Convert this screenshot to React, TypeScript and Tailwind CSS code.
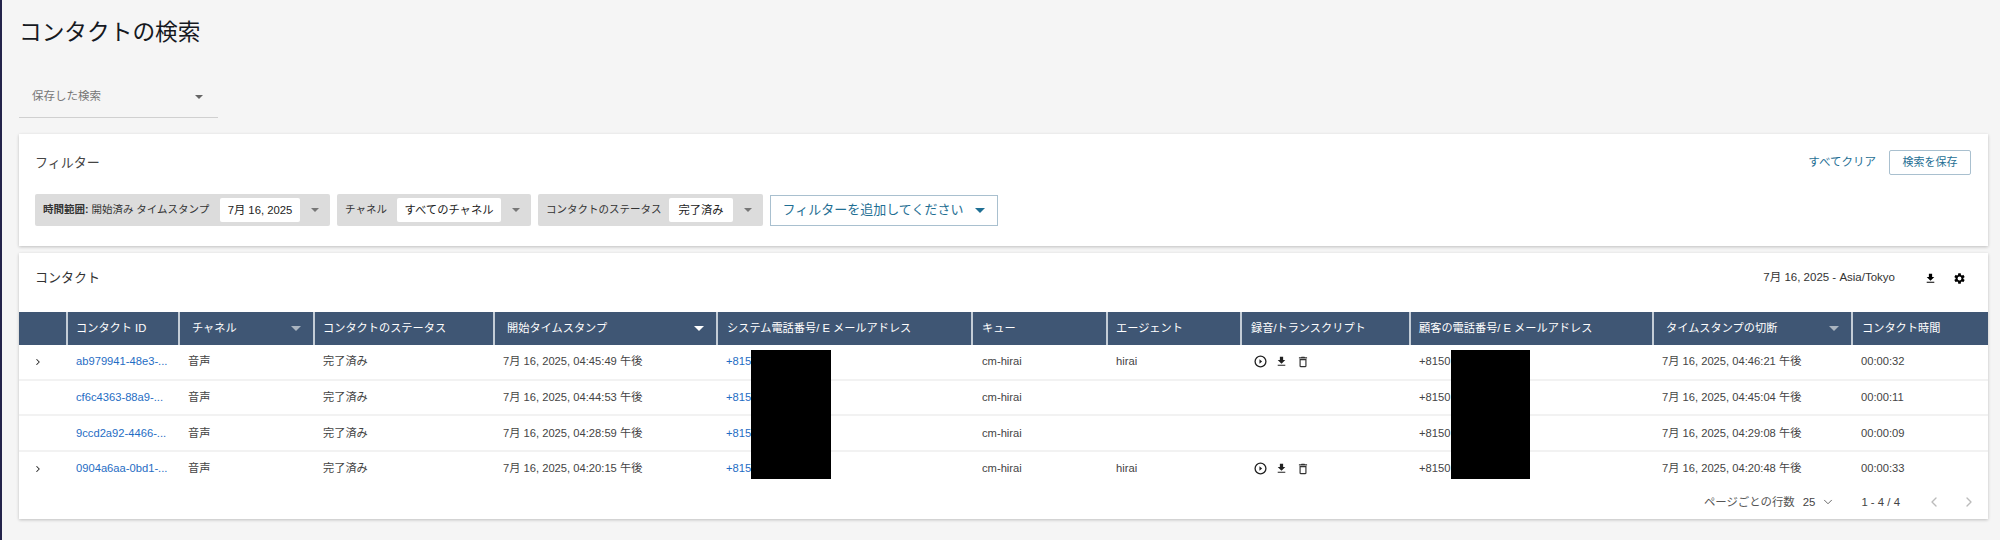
import { ChevronDown, ChevronLeft, ChevronRight } from 'lucide-react';

const gridCols = 'grid grid-cols-[48px_112px_135px_180px_223px_255px_135px_134px_169px_243px_199px_135px]';

const contacts = [
  { id: 'ab979941-48e3-...', start: '7月 16, 2025, 04:45:49 午後', agent: 'hirai', end: '7月 16, 2025, 04:46:21 午後', duration: '00:00:32', recorded: true },
  { id: 'cf6c4363-88a9-...', start: '7月 16, 2025, 04:44:53 午後', agent: '', end: '7月 16, 2025, 04:45:04 午後', duration: '00:00:11', recorded: false },
  { id: '9ccd2a92-4466-...', start: '7月 16, 2025, 04:28:59 午後', agent: '', end: '7月 16, 2025, 04:29:08 午後', duration: '00:00:09', recorded: false },
  { id: '0904a6aa-0bd1-...', start: '7月 16, 2025, 04:20:15 午後', agent: 'hirai', end: '7月 16, 2025, 04:20:48 午後', duration: '00:00:33', recorded: true },
];

function Caret({ className }: { className: string }) {
  return <span className={`w-0 h-0 border-x-[5px] border-x-transparent border-t-[5px] ${className}`} />;
}

function SmallCaret({ className }: { className: string }) {
  return <span className={`w-0 h-0 border-x-[4px] border-x-transparent border-t-[4px] ${className}`} />;
}

function DownloadIcon({ className }: { className: string }) {
  return (
    <svg viewBox="0 0 24 24" className={className} fill="currentColor">
      <path d="M5 20h14v-2H5v2zM19 9h-4V3H9v6H5l7 7 7-7z" />
    </svg>
  );
}

function PlayIcon() {
  return (
    <svg viewBox="0 0 24 24" className="w-[13px] h-[13px] text-[#222]" fill="none" stroke="currentColor" strokeWidth="2.4">
      <circle cx="12" cy="12" r="10" />
      <path d="M10 8l5 4-5 4z" fill="currentColor" stroke="none" />
    </svg>
  );
}

function TrashIcon() {
  return (
    <svg viewBox="0 0 24 24" className="w-[14px] h-[14px] text-[#333]" fill="currentColor">
      <path d="M6 19c0 1.1.9 2 2 2h8c1.1 0 2-.9 2-2V7H6v12zM8 9h8v10H8V9zm7.5-5l-1-1h-5l-1 1H5v2h14V4h-3.5z" />
    </svg>
  );
}

function GearIcon() {
  return (
    <svg viewBox="0 0 24 24" className="w-[13px] h-[13px] text-black" fill="currentColor">
      <path d="M19.14 12.94c.04-.3.06-.61.06-.94s-.02-.64-.07-.94l2.03-1.58a.49.49 0 0 0 .12-.61l-1.92-3.32a.49.49 0 0 0-.59-.22l-2.39.96a7.03 7.03 0 0 0-1.62-.94l-.36-2.54a.48.48 0 0 0-.48-.41h-3.84a.48.48 0 0 0-.47.41l-.36 2.54c-.59.24-1.13.57-1.62.94l-2.39-.96a.49.49 0 0 0-.59.22L2.74 8.87a.48.48 0 0 0 .12.61l2.03 1.58c-.05.3-.09.63-.09.94s.02.64.07.94l-2.03 1.58a.49.49 0 0 0-.12.61l1.92 3.32c.12.22.37.29.59.22l2.39-.96c.5.38 1.03.7 1.62.94l.36 2.54c.05.24.24.41.48.41h3.84c.24 0 .44-.17.47-.41l.36-2.54c.59-.24 1.13-.56 1.62-.94l2.39.96c.22.08.47 0 .59-.22l1.92-3.32a.48.48 0 0 0-.12-.61l-2.01-1.58zM12 15.6A3.6 3.6 0 1 1 12 8.4a3.6 3.6 0 0 1 0 7.2z" />
    </svg>
  );
}

function Chip({ children, value, valueWidth, width }: { children: React.ReactNode; value: string; valueWidth: string; width: string }) {
  return (
    <div className={`flex items-center h-8 pl-2 bg-[#dcdcdc] rounded-[2px] text-[10.5px] text-[#333] ${width}`}>
      <span className="flex-1 whitespace-nowrap">{children}</span>
      <span className={`flex items-center justify-center h-6 bg-white rounded-[2px] text-[11.3px] text-[#222] whitespace-nowrap ${valueWidth}`}>{value}</span>
      <span className="w-[30px] flex justify-center shrink-0">
        <SmallCaret className="border-t-[#777]" />
      </span>
    </div>
  );
}

function HeaderCell({ label, pad, caret }: { label: string; pad: string; caret?: 'dim' | 'bright' }) {
  return (
    <div className={`flex items-center justify-between border-l-2 border-[#c3ccd6] first:border-l-0 -ml-px first:ml-0 pr-[13px] whitespace-nowrap ${pad}`}>
      <span>{label}</span>
      {caret && <Caret className={caret === 'bright' ? 'border-t-white' : 'border-t-[#aab4c0]'} />}
    </div>
  );
}

export default function App() {
  return (
    <div className="min-h-[540px] bg-[#f5f5f5] border-l-2 border-[#23234a] pl-[17px] pr-3 font-['Liberation_Sans','Noto_Sans_CJK_JP',sans-serif]">
      <h1 className="h-16 flex items-center text-[22.7px] font-normal text-[#16191f]">コンタクトの検索</h1>

      <div className="w-[199px] h-[46px] mt-2 pt-[4px] flex items-center justify-between pl-[13px] pr-[15px] border-b border-[#d0d0d0] text-[11.5px] text-[#777]">
        <span>保存した検索</span>
        <SmallCaret className="border-t-[#666]" />
      </div>

      <section className="mt-4 h-28 bg-white shadow-[0_1px_3px_rgba(0,0,0,0.22)] pl-4 pr-[17px]">
        <div className="flex items-center justify-between h-[60px] pb-[3px]">
          <h2 className="text-[13px] font-normal text-[#444]">フィルター</h2>
          <div className="flex items-center gap-[13px]">
            <button className="text-[11.5px] text-[#1f6f94]">すべてクリア</button>
            <button className="w-[82px] h-[25px] border border-[#a9c0cf] rounded-[2px] text-[11px] text-[#1f6f94]">検索を保存</button>
          </div>
        </div>
        <div className="flex items-center gap-[7px]">
          <Chip width="w-[295px]" valueWidth="w-[80px]" value="7月 16, 2025">
            <b className="font-bold">時間範囲:</b> 開始済み タイムスタンプ
          </Chip>
          <Chip width="w-[194px]" valueWidth="w-[104px]" value="すべてのチャネル">
            チャネル
          </Chip>
          <Chip width="w-[225px]" valueWidth="w-[64px]" value="完了済み">
            コンタクトのステータス
          </Chip>
          <button className="flex items-center justify-center gap-[12px] w-[228px] h-[31px] border border-[#a9c0cf] text-[13px] text-[#1f6f94]">
            フィルターを追加してください
            <Caret className="border-t-[#1f6f94]" />
          </button>
        </div>
      </section>

      <section className="mt-[7px] h-[266px] bg-white shadow-[0_1px_3px_rgba(0,0,0,0.22)]">
        <div className="flex items-center justify-between h-[59px] pb-[9px] pl-4 pr-[22px] text-[#333]">
          <h2 className="text-[13px] font-normal">コンタクト</h2>
          <div className="flex items-center text-[11.5px]">
            <span>7月 16, 2025 - Asia/Tokyo</span>
            <DownloadIcon className="w-[13px] h-[13px] text-black ml-[29px]" />
            <span className="ml-4">
              <GearIcon />
            </span>
          </div>
        </div>

        <div className={`${gridCols} h-[33px] bg-[#3f5674] text-[11.2px] text-white`}>
          <HeaderCell label="" pad="pl-0" />
          <HeaderCell label="コンタクト ID" pad="pl-[8px]" />
          <HeaderCell label="チャネル" pad="pl-[12px]" caret="dim" />
          <HeaderCell label="コンタクトのステータス" pad="pl-[8px]" />
          <HeaderCell label="開始タイムスタンプ" pad="pl-[12px]" caret="bright" />
          <HeaderCell label="システム電話番号/ E メールアドレス" pad="pl-[9px]" />
          <HeaderCell label="キュー" pad="pl-[9px]" />
          <HeaderCell label="エージェント" pad="pl-[8px]" />
          <HeaderCell label="録音/トランスクリプト" pad="pl-[9px]" />
          <HeaderCell label="顧客の電話番号/ E メールアドレス" pad="pl-[8px]" />
          <HeaderCell label="タイムスタンプの切断" pad="pl-[12px]" caret="dim" />
          <HeaderCell label="コンタクト時間" pad="pl-[9px]" />
        </div>

        <div className="relative">
          {contacts.map((c, i) => (
            <div
              key={c.id}
              className={`${gridCols} h-[35.6px] items-center text-[11.2px] text-[#444] whitespace-nowrap border-b-2 ${i < 3 ? 'border-[#f2f2f2]' : 'border-transparent'}`}
            >
              <div className="pl-[14px]">
                {c.recorded && <ChevronRight className="w-[10px] h-[10px] text-[#222]" strokeWidth={2.5} />}
              </div>
              <div className="pl-[9px] text-[#1f6dc4]">{c.id}</div>
              <div className="pl-[9px]">音声</div>
              <div className="pl-[9px]">完了済み</div>
              <div className="pl-[9px]">{c.start}</div>
              <div className="pl-[9px] text-[#1f6dc4]">+815</div>
              <div className="pl-[10px]">cm-hirai</div>
              <div className="pl-[9px]">{c.agent}</div>
              <div className="pl-[13px] flex items-center gap-2">
                {c.recorded && (
                  <>
                    <PlayIcon />
                    <DownloadIcon className="w-[13px] h-[13px] text-[#222]" />
                    <TrashIcon />
                  </>
                )}
              </div>
              <div className="pl-[9px]">+8150</div>
              <div className="pl-[9px]">{c.end}</div>
              <div className="pl-[9px]">{c.duration}</div>
            </div>
          ))}
          {/* redacted numbers */}
          <div className="absolute top-[5px] left-[732px] w-[80px] h-[129px] bg-black" />
          <div className="absolute top-[5px] left-[1432px] w-[79px] h-[129px] bg-black" />
        </div>

        <div className="flex items-center justify-end h-[26px] mt-[2px] text-[11.4px] text-[#555]">
          <span>ページごとの行数</span>
          <span className="ml-2 text-[#444]">25</span>
          <ChevronDown className="w-[14px] h-[14px] ml-[6px] text-[#555]" strokeWidth={1.5} />
          <span className="ml-[26px] text-[#444]">1 - 4 / 4</span>
          <ChevronLeft className="w-4 h-4 ml-[26px] text-[#bbb]" strokeWidth={2} />
          <ChevronRight className="w-4 h-4 ml-[19px] mr-[11px] text-[#bbb]" strokeWidth={2} />
        </div>
      </section>
    </div>
  );
}
